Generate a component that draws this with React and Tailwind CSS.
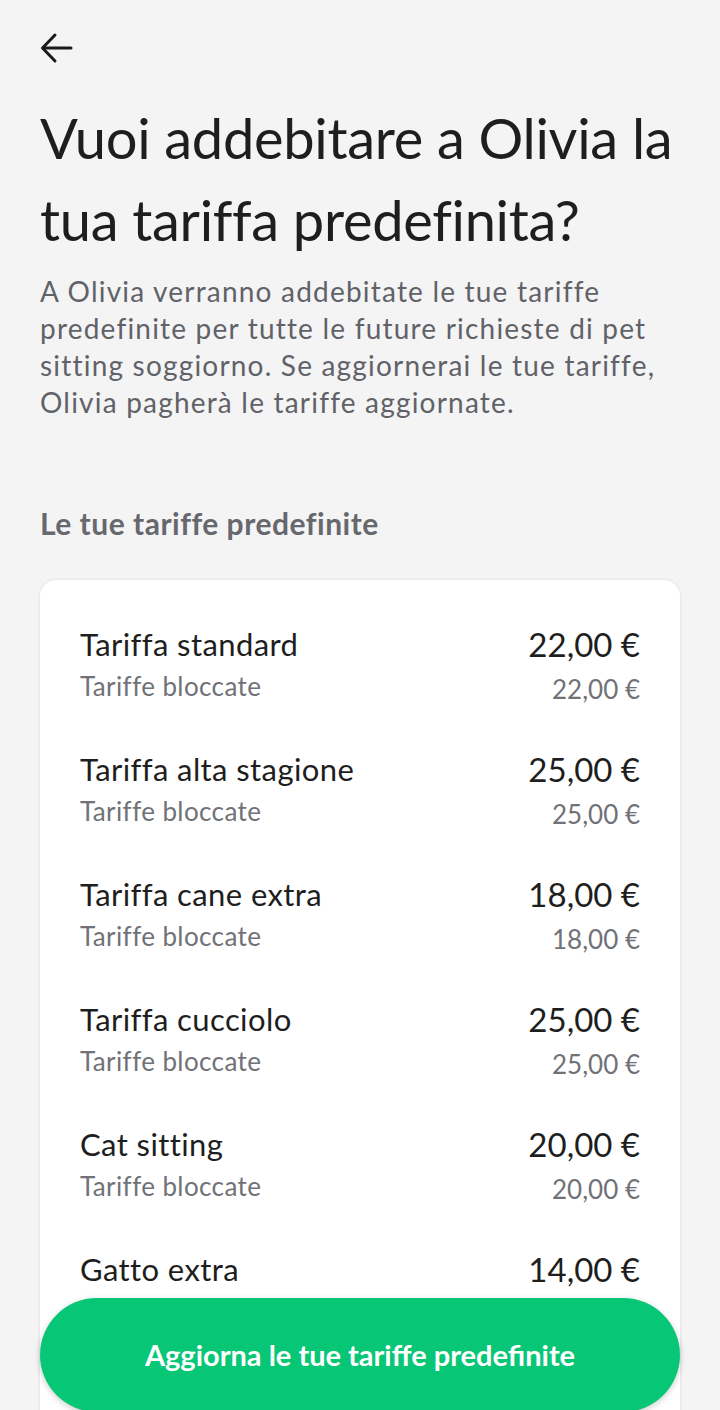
import React from "react";

const rows = [
  { name: "Tariffa standard", price: "22,00 €" },
  { name: "Tariffa alta stagione", price: "25,00 €" },
  { name: "Tariffa cane extra", price: "18,00 €" },
  { name: "Tariffa cucciolo", price: "25,00 €" },
  { name: "Cat sitting", price: "20,00 €" },
  { name: "Gatto extra", price: "14,00 €" },
];

export default function App() {
  return (
    <div
      className="relative h-[1410px] w-[720px] overflow-hidden bg-[#f4f4f5] text-[#1f1f1f]"
      style={{ fontFamily: "Lato, 'Open Sans', sans-serif" }}
    >
      <div className="px-10 pt-[32px]">
        <svg width="34" height="32" viewBox="0 0 34 32" fill="none" stroke="#1b1b1b" strokeWidth="3" strokeLinecap="round" strokeLinejoin="round">
          <path d="M31 16H3.5" />
          <path d="M15 3L2.5 16L15 29" />
        </svg>
        <h1 className="mt-[33px] whitespace-nowrap text-[56px] leading-[82px] font-normal tracking-[-0.3px] text-[#1e1e1e]">
          Vuoi addebitare a Olivia la
          <br />
          tua tariffa predefinita?
        </h1>
        <p className="mt-[12px] whitespace-nowrap text-[28px] leading-[37px] tracking-[1.2px] text-[#606268]">
          A Olivia verranno addebitate le tue tariffe
          <br />
          predefinite per tutte le future richieste di pet
          <br />
          sitting soggiorno. Se aggiornerai le tue tariffe,
          <br />
          Olivia pagherà le tariffe aggiornate.
        </p>
        <h2 className="mt-[86px] text-[30px] leading-[32px] font-bold tracking-[0.5px] text-[#66686d]">
          Le tue tariffe predefinite
        </h2>
        <div className="mt-[41px] rounded-2xl bg-white px-10 pt-[46px] pb-[120px] shadow-[0_0_3px_rgba(0,0,0,0.12)] flex flex-col gap-[47px]">
          {rows.map((r) => (
            <div key={r.name} className="flex justify-between">
              <div className="flex flex-col">
                <span className="text-[31px] leading-[36px] tracking-[0.4px] text-[#1e1e1e]">{r.name}</span>
                <span className="mt-[9px] text-[26px] leading-[30px] tracking-[0.4px] text-[#707277]">Tariffe bloccate</span>
              </div>
              <div className="flex flex-col items-end">
                <span className="text-[33px] leading-[36px] text-[#1e1e1e]">{r.price}</span>
                <span className="mt-[12px] text-[26px] leading-[30px] text-[#707277]">{r.price}</span>
              </div>
            </div>
          ))}
        </div>
      </div>
      <button className="absolute left-10 right-10 top-[1298px] h-[114px] rounded-full bg-[#07c675] shadow-[0_2px_6px_rgba(0,0,0,0.2)] text-white text-[29px] font-bold flex items-center justify-center">
        Aggiorna le tue tariffe predefinite
      </button>
    </div>
  );
}
